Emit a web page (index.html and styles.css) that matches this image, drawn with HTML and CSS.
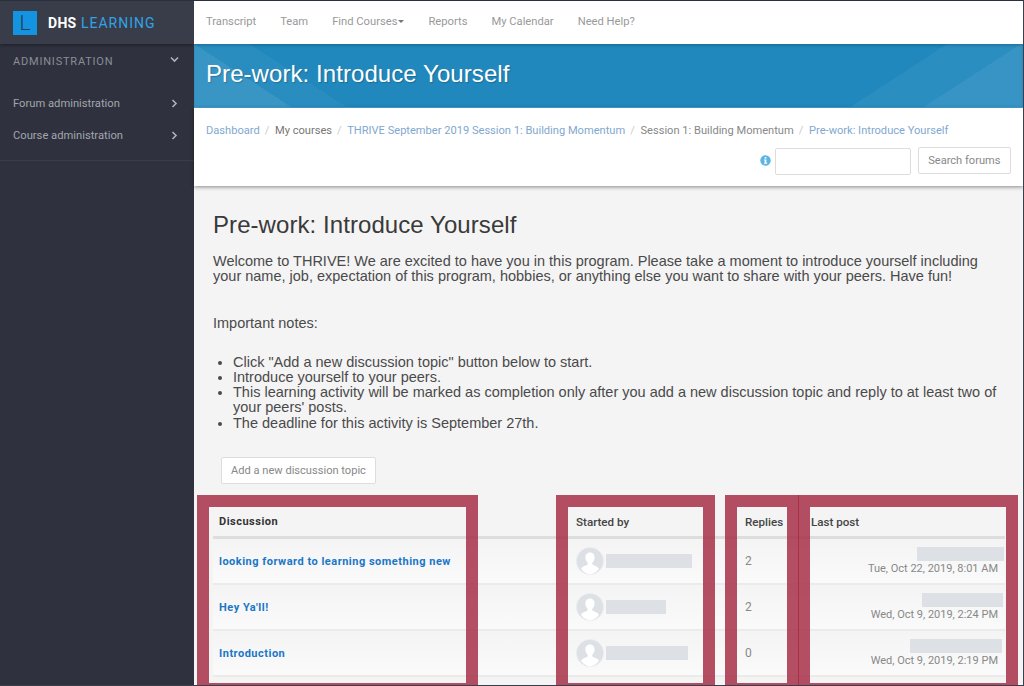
FILE: index.html
```html
<!DOCTYPE html>
<html lang="en">
<head>
<meta charset="UTF-8">
<title>Pre-work: Introduce Yourself</title>
<link rel="stylesheet" href="styles.css">
</head>
<body>
<div class="page">
    <aside class="sidebar">
        <div class="brand">
            <span class="brand-logo">L</span>
            <span class="brand-name"><b>DHS</b> LEARNING</span>
        </div>
        <div class="side-head">
            <span>ADMINISTRATION</span>
            <svg class="chev" width="9" height="9" viewBox="0 0 9 9"><path d="M1 2.5 4.5 6 8 2.5" fill="none" stroke="#aeb2bb" stroke-width="1.6"/></svg>
        </div>
        <div class="side-menu">
            <div class="side-item">
                <span>Forum administration</span>
                <svg class="chev" width="9" height="9" viewBox="0 0 9 9"><path d="M2.5 1 6 4.5 2.5 8" fill="none" stroke="#aeb2bb" stroke-width="1.6"/></svg>
            </div>
            <div class="side-item">
                <span>Course administration</span>
                <svg class="chev" width="9" height="9" viewBox="0 0 9 9"><path d="M2.5 1 6 4.5 2.5 8" fill="none" stroke="#aeb2bb" stroke-width="1.6"/></svg>
            </div>
        </div>
    </aside>

    <div class="content">
        <nav class="topnav">
            <a>Transcript</a>
            <a>Team</a>
            <a class="caret">Find Courses</a>
            <a>Reports</a>
            <a>My Calendar</a>
            <a>Need Help?</a>
        </nav>
        <header class="banner">
            <h1>Pre-work: Introduce Yourself</h1>
        </header>
        <div class="crumbbar">
            <div class="crumbs">
                <a>Dashboard</a><i>/</i>
                <span>My courses</span><i>/</i>
                <a>THRIVE September 2019 Session 1: Building Momentum</a><i>/</i>
                <span>Session 1: Building Momentum</span><i>/</i>
                <a>Pre-work: Introduce Yourself</a>
            </div>
            <div class="search">
                <svg width="11" height="11" viewBox="0 0 11 11"><circle cx="5.5" cy="5.5" r="5.2" fill="#5bb4e3"/><rect x="4.7" y="2" width="1.7" height="1.6" fill="#fff"/><path d="M3.9 4.5h2.5v3.2h.8v1H3.9v-1h.8V5.5h-.8z" fill="#fff"/></svg>
                <input class="search-input" type="text">
                <button class="btn">Search forums</button>
            </div>
        </div>

        <main class="main">
            <h2>Pre-work: Introduce Yourself</h2>
            <p class="intro">Welcome to THRIVE! We are excited to have you in this program. Please take a moment to introduce yourself including your name, job, expectation of this program, hobbies, or anything else you want to share with your peers. Have fun!</p>
            <p class="notes-title">Important notes:</p>
            <ul class="notes">
                <li>Click "Add a new discussion topic" button below to start.</li>
                <li>Introduce yourself to your peers.</li>
                <li>This learning activity will be marked as completion only after you add a new discussion topic and reply to at least two of your peers' posts.</li>
                <li>The deadline for this activity is September 27th.</li>
            </ul>
            <button class="btn add-btn">Add a new discussion topic</button>

            <div class="forum">
                <div class="row head">
                    <div class="c-topic">Discussion</div>
                    <div class="c-user">Started by</div>
                    <div class="c-replies">Replies</div>
                    <div class="c-last">Last post</div>
                </div>
                <div class="row">
                    <div class="c-topic"><a>looking forward to learning something new</a></div>
                    <div class="c-user">
                        <svg class="avatar" viewBox="0 0 28 28"><use href="#person"/></svg>
                        <span class="blur" style="width:86px"></span>
                    </div>
                    <div class="c-replies">2</div>
                    <div class="c-last"><span class="blur" style="width:87px;margin-right:-6px"></span><span>Tue, Oct 22, 2019, 8:01 AM</span></div>
                </div>
                <div class="row">
                    <div class="c-topic"><a>Hey Ya'll!</a></div>
                    <div class="c-user">
                        <svg class="avatar" viewBox="0 0 28 28"><use href="#person"/></svg>
                        <span class="blur" style="width:60px"></span>
                    </div>
                    <div class="c-replies">2</div>
                    <div class="c-last"><span class="blur" style="width:81px;margin-right:-5px"></span><span>Wed, Oct 9, 2019, 2:24 PM</span></div>
                </div>
                <div class="row">
                    <div class="c-topic"><a>Introduction</a></div>
                    <div class="c-user">
                        <svg class="avatar" viewBox="0 0 28 28"><use href="#person"/></svg>
                        <span class="blur" style="width:82px"></span>
                    </div>
                    <div class="c-replies">0</div>
                    <div class="c-last"><span class="blur" style="width:92px;margin-right:-4px"></span><span>Wed, Oct 9, 2019, 2:19 PM</span></div>
                </div>
            </div>
        </main>

        <!-- annotation frames drawn over the table -->
        <div class="frame f-topic"></div>
        <div class="frame f-user"></div>
        <div class="frame f-replies"></div>
        <div class="frame f-last"></div>
    </div>
</div>

<svg class="defs" width="0" height="0">
    <symbol id="person" viewBox="0 0 28 28">
        <circle cx="14" cy="14" r="13.6" fill="#dde0e5" stroke="#eceef0" stroke-width=".8"/>
        <path d="M14 5.5c-3 0-4.600 2.300-4.600 5 0 2.300 1 4.200 2.300 5.400v1.600c-2.500 1.300-5.700 2-6.700 4.300A13.500 13.500 0 0 0 14 27.500a13.500 13.500 0 0 0 9-5.700c-1-2.300-4.200-3-6.700-4.300v-1.600c1.300-1.200 2.300-3.100 2.300-5.400 0-2.700-1.600-5-4.600-5z" fill="#fff"/>
    </symbol>
</svg>
</body>
</html>
```

FILE: styles.css
```css
html, body {
    margin: 0;
    padding: 0;
    height: 686px;
    overflow: hidden;
}
body {
    font-family: Roboto, "Liberation Sans", sans-serif;
    background-color: #f4f4f4;
    color: #444;
}
.page {
    display: flex;
    height: 686px;
    border-top: 1px solid #2b3040;
    border-right: 1px solid #3a3f4e;
    border-bottom: 1px solid #3a3f4e;
    box-sizing: border-box;
    overflow: hidden;
}
.defs {
    position: absolute;
}

/* Sidebar */
.sidebar {
    width: 194px;
    flex: none;
    background-color: #2f323e;
    color: #a2a5ad;
}
.brand {
    height: 43px;
    display: flex;
    align-items: center;
    padding-left: 13px;
    background-color: #393d4a;
    box-shadow: 0 1px 3px rgba(0,0,0,0.4);
}
.brand-logo {
    width: 24px;
    height: 24px;
    background-color: #1394e0;
    color: #2a3a55;
    font-size: 21px;
    line-height: 24px;
    text-align: center;
    font-weight: 300;
}
.brand-name {
    margin-left: 11px;
    font-size: 14px;
    font-weight: 400;
    color: #31a3e6;
    letter-spacing: 1px;
}
.brand-name b {
    color: #fff;
    font-weight: 700;
    letter-spacing: 0.3px;
}
.side-head {
    display: flex;
    justify-content: space-between;
    padding: 11px 15px 0 13px;
    font-size: 11px;
    letter-spacing: 0.8px;
    line-height: 14px;
    color: #8a8d96;
}
.chev {
    flex: none;
}
.side-menu {
    margin-top: 18px;
    padding-bottom: 9px;
    border-bottom: 1px solid #3a3d4a;
}
.side-item {
    height: 32px;
    display: flex;
    align-items: center;
    justify-content: space-between;
    padding: 0 15px 0 13px;
    font-size: 11.200px;
}

/* Content */
.content {
    flex: 1;
    min-width: 0;
    position: relative;
}
.topnav {
    height: 43px;
    box-sizing: border-box;
    padding: 0 0 2px 12px;
    background-color: #fff;
    display: flex;
    align-items: center;
    gap: 24px;
    font-size: 11.200px;
    color: #999;
}
.caret::after {
    content: "";
    display: inline-block;
    margin-left: 1px;
    vertical-align: 2px;
    border-top: 3px solid #777;
    border-left: 3px solid transparent;
    border-right: 3px solid transparent;
}
.banner {
    height: 64px;
    box-sizing: border-box;
    padding: 0 0 4px 12px;
    display: flex;
    align-items: center;
    background-color: #2088bd;
    background-image:
        linear-gradient(33deg, rgba(255,255,255,0.11) 0, rgba(255,255,255,0.11) 53px, rgba(255,255,255,0.04) 53px, rgba(255,255,255,0.04) 83px, transparent 83px),
        linear-gradient(327deg, rgba(255,255,255,0.1) 0, rgba(255,255,255,0.1) 54px, rgba(255,255,255,0.05) 54px, rgba(255,255,255,0.05) 94px, transparent 94px);
    border-bottom: 1px solid #4aa6d6;
    box-shadow: inset 0 2px 2px rgba(0,0,0,0.15);
}
.banner h1 {
    margin: 0;
    font-family: "Liberation Sans", Arial, sans-serif;
    font-size: 24px;
    letter-spacing: 0.07px;
    font-weight: 400;
    color: #fff;
    text-shadow: 1px 1px 1px rgba(0,0,0,0.2);
}
.crumbbar {
    height: 78px;
    box-sizing: border-box;
    background-color: #fff;
    padding: 15px 12px 0;
    box-shadow: 0 1px 4px rgba(0,0,0,0.45);
    position: relative;
}
.crumbs {
    font-size: 11.100px;
    line-height: 15px;
    color: #888;
    white-space: nowrap;
}
.crumbs a {
    color: #7fa8d0;
}
.crumbs span:first-of-type {
    color: #777;
}
.crumbs i {
    font-style: normal;
    color: #ccc;
    margin: 0 3px 0 5px;
}
.search {
    display: flex;
    justify-content: flex-end;
    align-items: center;
    margin-top: 8px;
    gap: 7px;
}
.search svg {
    margin-right: -3px;
}
.search-input {
    width: 136px;
    height: 27px;
    margin-top: 2px;
    box-sizing: border-box;
    border: 1px solid #ddd;
    border-radius: 2px;
    background-color: #fff;
}
.search .btn {
    padding: 0 9.500px;
}
.btn {
    font-family: Roboto, "Liberation Sans", sans-serif;
    font-size: 11.100px;
    color: #888;
    background-color: #fff;
    border: 1px solid #ddd;
    border-radius: 2px;
    height: 27px;
    padding: 0 9px;
}

/* Main column */
.main {
    padding: 24px 18px 0 19px;
    font-family: "Liberation Sans", Arial, sans-serif;
    color: #4a4a4a;
}
.main h2 {
    margin: 0;
    font-size: 24px;
    letter-spacing: 0.07px;
    line-height: 30px;
    font-weight: 400;
    color: #3a3a3a;
}
.intro {
    margin: 14px 0 0;
    font-size: 14.500px;
    line-height: 15.300px;
}
.notes-title {
    margin: 30px 0 0;
    font-size: 14.500px;
    line-height: 16px;
}
.notes {
    margin: 24px 0 0;
    padding-left: 20px;
    font-size: 14.500px;
    line-height: 15.300px;
}
.add-btn {
    display: block;
    margin: 26px 0 0 8px;
    padding: 0 9px;
}

/* Forum table */
.forum {
    margin-top: 23px;
    font-family: Roboto, "Liberation Sans", sans-serif;
    font-size: 11px;
    color: #888;
}
.row {
    height: 46px;
    display: flex;
    align-items: center;
    box-sizing: border-box;
    border-bottom: 2px solid #ebebeb;
    background-image: linear-gradient(#f4f4f4, #fafafa);
}
.row.head {
    height: 32px;
    color: #444;
    font-size: 11.600px;
    line-height: 14px;
    font-weight: 500;
    border-bottom: 3px solid #ddd;
    background-image: none;
}
.c-topic {
    width: 359px;
    padding-left: 6px;
    box-sizing: border-box;
    font-size: 11px;
    font-weight: 700;
    letter-spacing: 0.5px;
    flex: none;
}
.head .c-topic {
    color: #333;
}
.c-topic a {
    color: #1a76c7;
}
.c-user {
    width: 170px;
    flex: none;
    padding-left: 4px;
    box-sizing: border-box;
    display: flex;
    align-items: center;
    gap: 2px;
}
.avatar {
    width: 28px;
    height: 28px;
    flex: none;
}
.blur {
    display: block;
    height: 14px;
    background-color: #dde0e5;
}
.c-replies {
    width: 69px;
    flex: none;
    padding-left: 3px;
    box-sizing: border-box;
}
.row:not(.head) .c-replies {
    font-size: 12px;
}
.c-last {
    flex: 1;
    padding-right: 7px;
    display: flex;
    flex-direction: column;
    align-items: flex-end;
    line-height: 14px;
}
.c-last .blur {
    margin-bottom: 1px;
}
.head .c-last {
    align-items: flex-start;
}

/* Red annotation frames */
.frame {
    position: absolute;
    top: 494px;
    height: 190px;
    box-sizing: border-box;
    border: 12px solid rgba(165, 40, 65, 0.82);
    border-bottom-width: 2px;
}
.f-topic {
    left: 3px;
    width: 281px;
}
.f-user {
    left: 362px;
    width: 159px;
}
.f-replies {
    left: 531px;
    width: 74px;
}
.f-last {
    left: 604px;
    width: 220px;
}
```
